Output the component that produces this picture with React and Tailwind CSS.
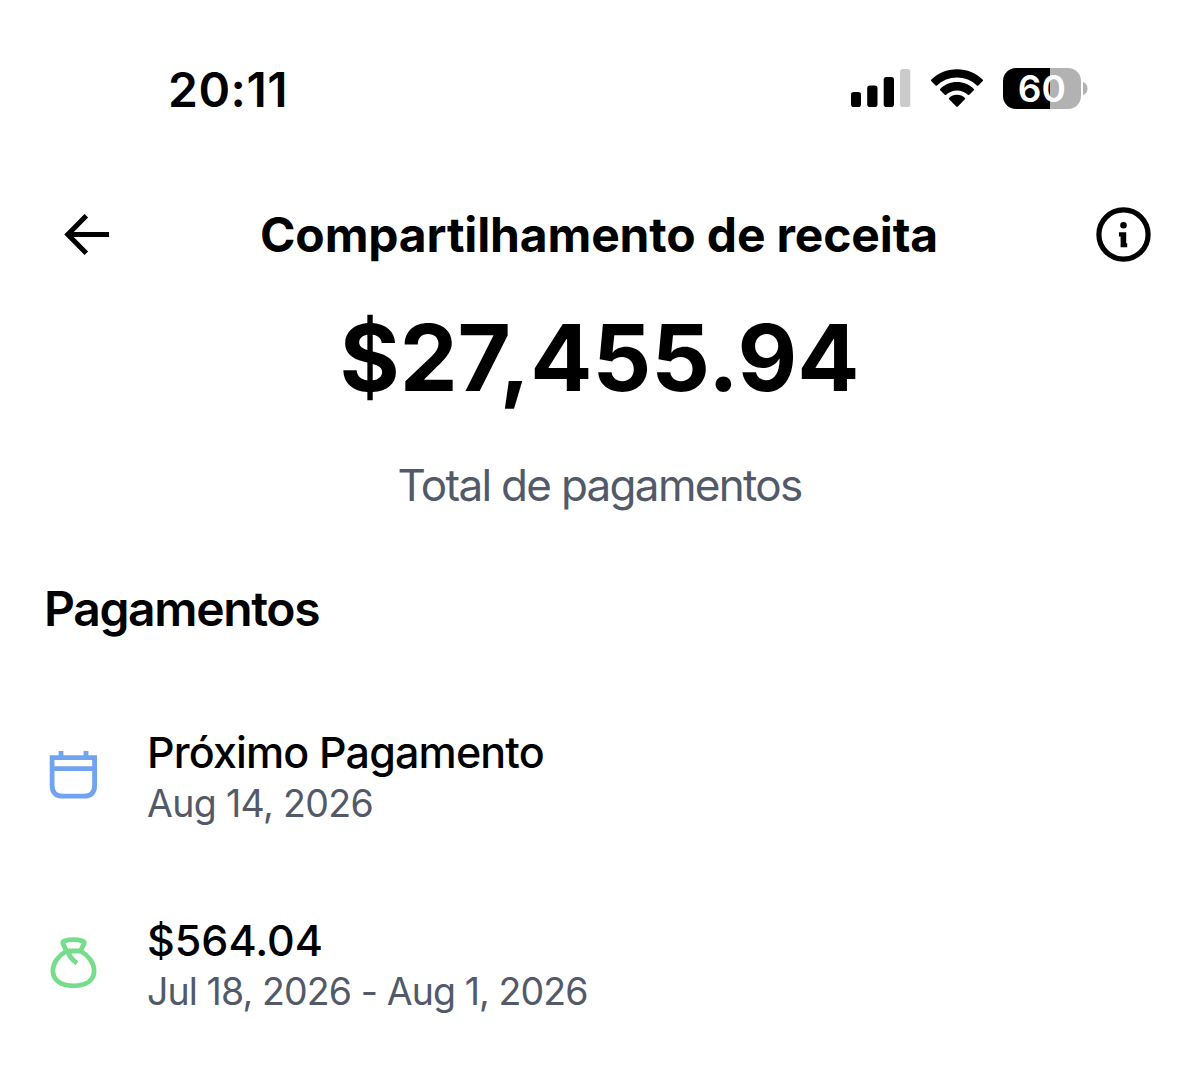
function SignalIcon() {
  return (
    <svg className="h-[38px] w-[60px]" viewBox="0 0 60 38">
      <rect x="0" y="23" width="10" height="15" rx="2.800" />
      <rect x="16.200" y="16.500" width="10.300" height="21.500" rx="2.800" />
      <rect x="32.700" y="8" width="10.300" height="30" rx="2.800" />
      <rect x="49" y="0" width="10.300" height="38" rx="2.800" fill="#cbcbcb" />
    </svg>
  );
}

function WifiIcon() {
  return (
    <svg className="h-[38px] w-[54px]" viewBox="0 0 54 38">
      <path d="M27 0.2C17 .2 7.800 4.100 1.200 10.700Q0.600 11.400 1.200 12.100L5.600 16.500Q6.300 17.100 7 16.500C12.400 11.300 19.400 8.500 27 8.500S41.600 11.300 47 16.500Q47.700 17.100 48.400 16.500L52.800 12.100Q53.400 11.400 52.800 10.700C46.200 4.100 37 .2 27 .2Z" />
      <path d="M27 13.100C20.500 13.100 14.600 15.700 10.200 20Q9.600 20.700 10.200 21.300L14.700 25.700Q15.400 26.300 16.100 25.700C19 23 22.800 21.400 27 21.400S35 23 37.900 25.700Q38.600 26.300 39.300 25.700L43.800 21.300Q44.400 20.700 43.800 20C39.400 15.700 33.500 13.100 27 13.100Z" />
      <path d="M27 25.800C23.900 25.800 21.200 26.900 19.100 28.900Q18.400 29.600 19.100 30.300L26.200 37.400Q27 38.100 27.800 37.400L34.900 30.300Q35.600 29.600 34.900 28.900C32.800 26.900 30.100 25.800 27 25.800Z" />
    </svg>
  );
}

function Battery() {
  return (
    <div className="flex items-center">
      <div className="flex h-[41px] w-[78px] items-center justify-center rounded-[13px] bg-linear-to-r from-black from-60% to-[#b2b2b2] to-60%">
        <span className="text-[37px] leading-[41px] font-semibold tracking-[0.2px] text-white">60</span>
      </div>
      <svg className="ml-[2px] h-[13px] w-[5px]" viewBox="0 0 5 13" fill="#b2b2b2">
        <path d="M0 0C3 1 4.500 3.500 4.500 6.500S3 12 0 13Z" />
      </svg>
    </div>
  );
}

function BackIcon() {
  return (
    <svg className="h-[42px] w-[46px]" viewBox="0 0 46 42" fill="none" stroke="black" strokeWidth="5">
      <path d="M45 20.500H4M22.300 1.700L3.800 20.500L22.300 39.300" />
    </svg>
  );
}

function InfoIcon() {
  return (
    <svg className="size-[56px]" viewBox="0 0 56 56">
      <circle cx="27.500" cy="27.500" r="24.600" fill="none" stroke="black" strokeWidth="5.200" />
      <circle cx="27.500" cy="18.300" r="3.300" />
      <path d="M23 25.300H30.200V36.200H31.200V40.300H24.600V29.600H23Z" />
    </svg>
  );
}

function CalendarIcon() {
  return (
    <svg className="h-[48px] w-[48px]" viewBox="0 0 48 48" fill="none" stroke="#71a3f1" strokeWidth="4.800">
      <path d="M3.100 6.600H45.600V34.500Q45.600 45.200 34.900 45.200H13.800Q3.100 45.200 3.100 34.500Z" />
      <path d="M3.100 17.600H45.600M12 0V6M37 0V6" />
    </svg>
  );
}

function MoneyBagIcon() {
  return (
    <svg className="h-[52px] w-[48px]" viewBox="0 0 48 52" fill="none" stroke="#77dd8b" strokeWidth="4.800" strokeLinejoin="round">
      <path d="M17.500 14L14 6.800Q13.200 4.700 15.200 4Q24.500 1.300 33.800 4Q35.800 4.700 35 6.800L31.500 14" />
      <path d="M17.500 14H31.500C39.500 18.500 45.100 26 45.100 33.500C45.100 43.500 37 48.800 24.500 48.800S3.900 43.500 3.900 33.500C3.900 26 9.500 18.500 17.500 14ZM18.500 14Q21 21.500 28 26.300" />
    </svg>
  );
}

function PaymentRow({ icon, title, titleClass, detail, detailClass }) {
  return (
    <li className="flex items-center">
      <div className="-mt-[6px] flex w-[101px] shrink-0 pl-[3px]">{icon}</div>
      <div className="whitespace-nowrap">
        <p className={"text-[43px] leading-[51px] font-medium " + titleClass}>{title}</p>
        <p className={"text-[37.5px] leading-[51px] text-[#525a69] " + detailClass}>{detail}</p>
      </div>
    </li>
  );
}

export default function App() {
  return (
    <main className="h-[1065px] w-[1199px] overflow-hidden bg-white pt-[58px] font-['Inter',sans-serif] whitespace-nowrap text-black">
      <div className="flex h-[60px] items-center pr-[111px] pl-[168px]">
        <span className="pt-[3px] text-[48px] leading-[60px] font-semibold tracking-[0.5px]">20:11</span>
        <div className="ml-auto flex items-center">
          <SignalIcon />
          <div className="mr-[19px] ml-[19px]"><WifiIcon /></div>
          <Battery />
        </div>
      </div>

      <header className="mt-[87px] flex h-[60px] items-center justify-between pr-[47px] pl-[64px]">
        <BackIcon />
        <h1 className="mr-[8px] text-[48px] leading-[60px] font-bold tracking-[-0.15px]">Compartilhamento de receita</h1>
        <InfoIcon />
      </header>

      <section className="mt-[43px] text-center">
        <p className="text-[92px] leading-[100px] font-bold">$27,455.94</p>
        <p className="mt-[47px] text-[44px] leading-[60px] tracking-[-1.7px] text-[#525a69]">Total de pagamentos</p>
      </section>

      <section className="mt-[64px] px-[46px]">
        <h2 className="-ml-[2px] text-[48px] leading-[60px] font-semibold tracking-[-1.35px]">Pagamentos</h2>
        <ul className="mt-[88px] flex flex-col gap-[86px]">
          <PaymentRow icon={<CalendarIcon />} title="Próximo Pagamento" titleClass="tracking-[-0.85px]" detail="Aug 14, 2026" detailClass="tracking-[-0.65px]" />
          <PaymentRow icon={<MoneyBagIcon />} title="$564.04" titleClass="" detail="Jul 18, 2026 - Aug 1, 2026" detailClass="tracking-[-0.9px]" />
        </ul>
      </section>
    </main>
  );
}
